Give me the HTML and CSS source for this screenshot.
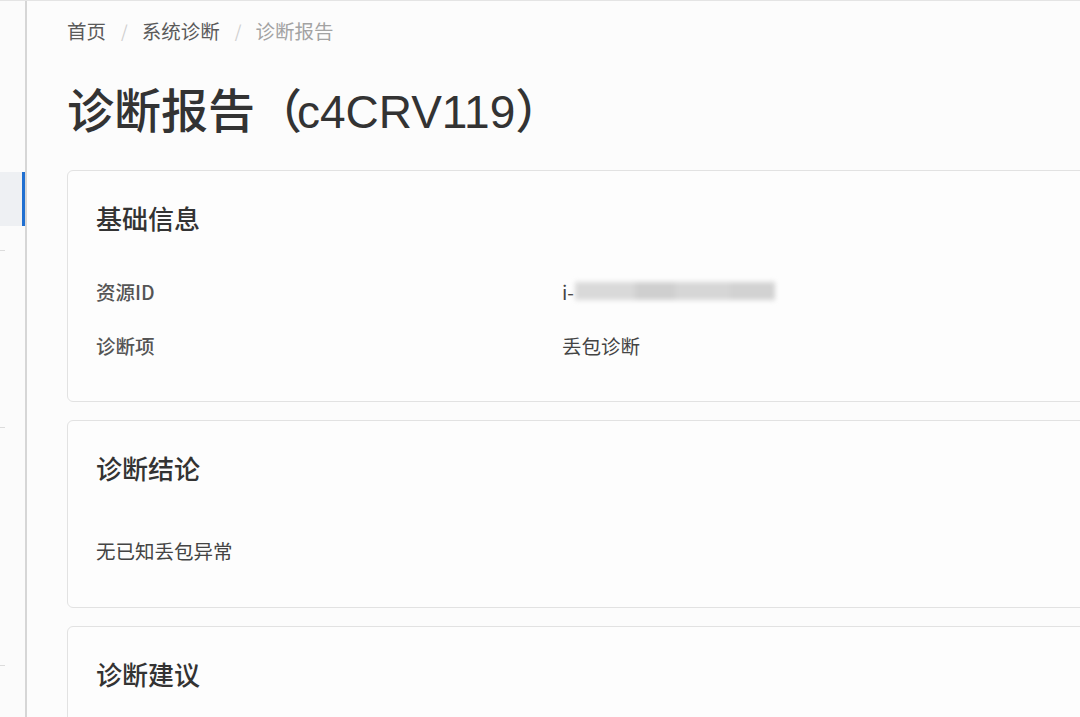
FILE: index.html
```html
<!DOCTYPE html>
<html lang="zh-CN">
<head>
<meta charset="utf-8">
<title>诊断报告</title>
<link rel="stylesheet" href="styles.css">
</head>
<body>
<div class="app">
  <aside class="sidebar">
    <div class="side-item active"></div>
    <div class="side-divider d1"></div>
    <div class="side-divider d2"></div>
    <div class="side-divider d3"></div>
  </aside>
  <main class="main">
    <nav class="breadcrumb">
      <span class="crumb">首页</span>
      <span class="sep">/</span>
      <span class="crumb">系统诊断</span>
      <span class="sep">/</span>
      <span class="crumb current">诊断报告</span>
    </nav>
    <h1 class="page-title">诊断报告（<span class="latin">c4CRV119</span>）</h1>

    <section class="card">
      <h2 class="card-title">基础信息</h2>
      <div class="info-grid">
        <div class="info-row">
          <div class="label">资源ID</div>
          <div class="value">i-<span class="masked"><span class="m1"></span><span class="m2"></span><span class="m3"></span><span class="m4"></span></span></div>
        </div>
        <div class="info-row">
          <div class="label">诊断项</div>
          <div class="value">丢包诊断</div>
        </div>
      </div>
    </section>

    <section class="card">
      <h2 class="card-title">诊断结论</h2>
      <p class="conclusion">无已知丢包异常</p>
    </section>

    <section class="card">
      <h2 class="card-title">诊断建议</h2>
      <p class="conclusion">&nbsp;</p>
    </section>
  </main>
</div>
</body>
</html>
```

FILE: styles.css
```css
* { box-sizing: border-box; }

html, body {
  margin: 0;
  padding: 0;
  height: 100%;
  overflow: hidden;
  background: #fcfcfc;
  font-family: "Noto Sans CJK SC", "Noto Sans", sans-serif;
  color: #333;
}

.app {
  display: flex;
  height: 717px;
  border-top: 1px solid #e4e4e4;
}

.sidebar {
  width: 27px;
  flex: none;
  position: relative;
  background: #fbfbfb;
  border-right: 2px solid #d6d6d6;
  padding-top: 171px;
}

.side-item {
  height: 54px;
  background: #eef0f3;
  border-right: 3px solid #1f6fd1;
}

.side-divider {
  position: absolute;
  left: 0;
  width: 5px;
  border-top: 1px solid #dcdcdc;
}
.side-divider.d1 { top: 249px; }
.side-divider.d2 { top: 426px; }
.side-divider.d3 { top: 664px; }

.main {
  flex: none;
  width: 1100px;
  padding-left: 40px;
}

.breadcrumb {
  display: flex;
  align-items: center;
  height: 60px;
  font-size: 19.5px;
  color: #5a5a5a;
  padding-bottom: 2px;
}
.crumb.current { color: #a3a3a3; }
.sep {
  color: #cfcfcf;
  margin: 0 14px 0 15px;
  font-size: 17px;
}

.page-title {
  margin: 0;
  height: 109px;
  padding-top: 15px;
  font-size: 47px;
  line-height: 64px;
  font-weight: 500;
  color: #333;
}
.page-title .latin {
  font-family: "Liberation Sans", Arial, sans-serif;
  font-weight: 400;
  font-size: 46px;
  color: #333;
  margin-left: -5px;
}

.card {
  background: #fdfdfd;
  border: 1.5px solid #e2e2e2;
  border-radius: 6px;
  padding: 29px 28px 29px;
  margin-bottom: 18px;
}

.card-title {
  margin: 0;
  font-size: 26px;
  line-height: 36px;
  font-weight: 500;
  color: #333;
}

.info-grid {
  margin-top: 28px;
}

.info-row {
  display: grid;
  grid-template-columns: 466px 1fr;
  height: 54px;
  align-items: center;
  font-size: 19.5px;
}

.label {
  font-weight: 500;
  color: #555;
}

.value {
  color: #444;
  display: flex;
  align-items: center;
}

.masked {
  display: inline-flex;
  filter: blur(2.5px);
  margin-left: 1px;
}
.masked span {
  display: inline-block;
  height: 18px;
}
.m1 { width: 60px; background: #d9d9d9; }
.m2 { width: 40px; background: #cfcfcf; }
.m3 { width: 55px; background: #d6d6d6; }
.m4 { width: 45px; background: #d2d2d2; }

.conclusion {
  margin: 38px 0 0;
  height: 54px;
  line-height: 54px;
  font-size: 19.5px;
  color: #444;
}
```
